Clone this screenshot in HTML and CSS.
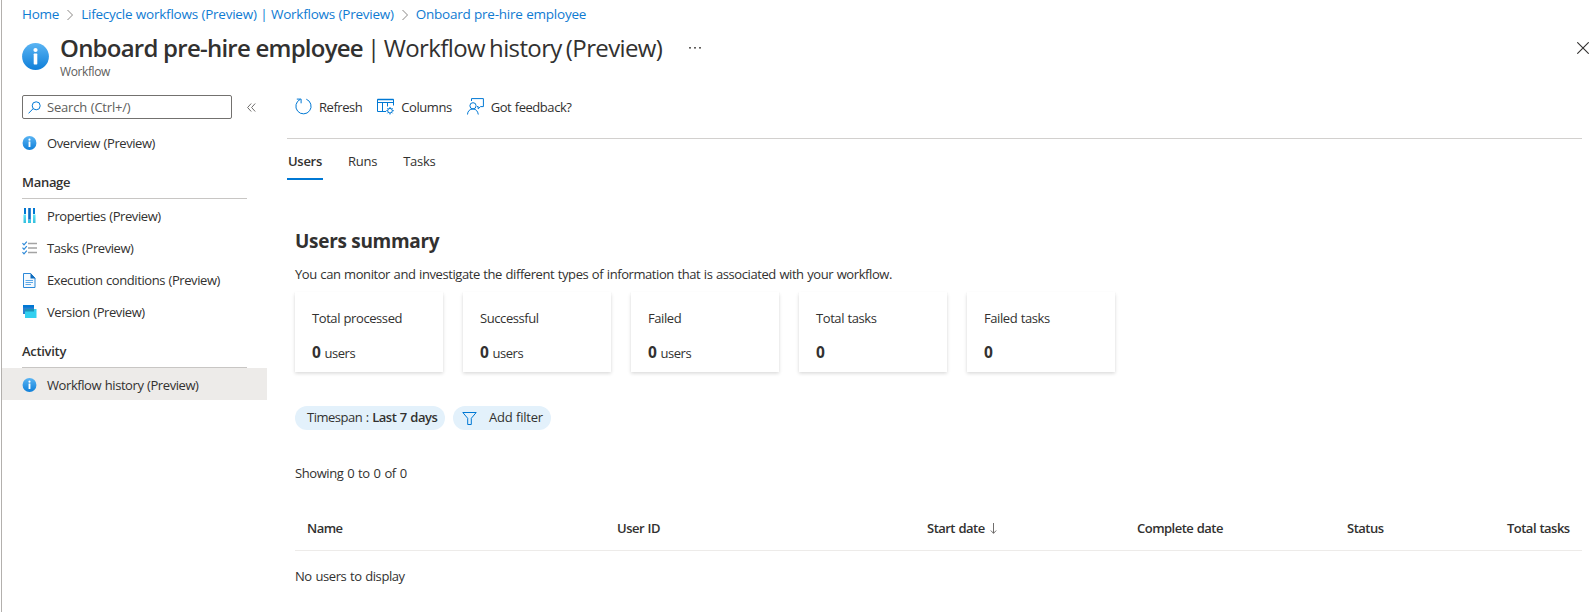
FILE: index.html
```html
<!DOCTYPE html>
<html lang="en">
<head>
<meta charset="utf-8">
<title>Onboard pre-hire employee | Workflow history (Preview)</title>
<link rel="stylesheet" href="styles.css">
</head>
<body>
<svg class="defs" width="0" height="0" aria-hidden="true">
  <defs>
    <linearGradient id="blue" x1="0" y1="0" x2="0" y2="1"><stop offset="0" stop-color="#5ab4f3"/><stop offset="1" stop-color="#0f7fd9"/></linearGradient>
    <linearGradient id="cyan" x1="0" y1="0" x2="0" y2="1"><stop offset="0" stop-color="#5ee3f8"/><stop offset="1" stop-color="#32bedd"/></linearGradient>
    <symbol id="info" viewBox="0 0 27 27"><circle cx="13.5" cy="13.5" r="13.4" fill="url(#blue)"/><circle cx="13.5" cy="7" r="2.1" fill="#fff"/><rect x="11.7" y="10.6" width="3.6" height="10.8" rx=".6" fill="#fff"/></symbol>
    <symbol id="chev" viewBox="0 0 8 12"><path d="M1.5 1l5 5-5 5" fill="none" stroke="#8a8886"/></symbol>
  </defs>
</svg>
<div class="page">
  <nav class="crumbs">
    <a>Home</a><svg class="sep" width="8" height="12"><use href="#chev"/></svg>
    <a>Lifecycle workflows (Preview) | Workflows (Preview)</a><svg class="sep" width="8" height="12"><use href="#chev"/></svg>
    <a>Onboard pre-hire employee</a>
  </nav>
  <header class="head">
    <svg class="head-icon" width="27" height="27"><use href="#info"/></svg>
    <div class="head-text">
      <h1><b>Onboard pre-hire employee</b><span class="light"> | Workflow history (Preview)</span></h1>
      <p class="sub">Workflow</p>
    </div>
    <svg class="more" width="12" height="3" fill="#605e5c"><rect x="0" y="1" width="2" height="1.6"/><rect x="5" y="1" width="2" height="1.6"/><rect x="10" y="1" width="2" height="1.6"/></svg>
    <svg class="close" width="12" height="12" viewBox="0 0 12 12"><path d="M.3.3l11.4 11.4M11.7.3L.3 11.7" stroke="#323130" stroke-width="1.1"/></svg>
  </header>
  <div class="body">
    <aside class="side">
      <div class="search-row">
        <div class="search"><svg width="13" height="13" viewBox="0 0 13 13" fill="none" stroke="#0078d4"><circle cx="8.2" cy="4.8" r="4"/><path d="M5.2 7.6L.5 12.4"/></svg><span>Search (Ctrl+/)</span></div>
        <svg class="collapse" width="9" height="9" viewBox="0 0 9 9" fill="none" stroke="#605e5c" stroke-width=".9"><path d="M4.2.5l-3.6 4 3.6 4M8.2.5l-3.6 4 3.6 4"/></svg>
      </div>
      <a class="item overview"><svg width="14" height="14"><use href="#info"/></svg>Overview (Preview)</a>
      <h2>Manage</h2>
      <a class="item"><svg class="i-props" width="15" height="16" viewBox="0 0 15 16"><path d="M2 0h2v6H2zM11 0h2v6h-2z" fill="#0078d4"/><path d="M6 0h3v12H6z" fill="#5ea8e6"/><path d="M6.500 0h2v11h-2z" fill="#0f6cbd"/><path d="M1.500 6.500H4V15H1.500zM11 6.500h2.500V15H11zM6 12h3v3H6z" fill="url(#cyan)"/></svg>Properties (Preview)</a>
      <a class="item"><svg width="15" height="14" viewBox="0 0 15 14" fill="none"><path d="M6 2.5h9M6 7h9M6 11.5h9" stroke="#a3a3a3" stroke-width="1.5"/><path d="M.5 2.2L2 3.8 4.8.7M.5 6.7L2 8.3l2.8-3.1M.5 11.2L2 12.8l2.8-3.1" stroke="#2b88d8" stroke-width="1.2"/></svg>Tasks (Preview)</a>
      <a class="item"><svg width="15" height="15" viewBox="0 0 15 15"><path d="M1.500.5h7L13 5v9.500H1.500z" fill="#f3f9fe" stroke="#2b88d8"/><path d="M8.500 0L13.500 5.500h-5z" fill="#0f6cbd"/><path d="M3.500 7.500H11M3.500 9.500H11M3.500 11.500H9" stroke="#5ea8e6"/></svg>Execution conditions (Preview)</a>
      <a class="item"><svg width="15" height="14" viewBox="0 0 15 14"><path d="M1 0h11v9H1z" fill="#2b7fd0"/><path d="M1 0h11v2.500H1z" fill="#0078d4"/><path d="M3 4h11.500v9H3z" fill="#32d0f0"/><path d="M3 4h9v2.500H3z" fill="#1b93b8"/></svg>Version (Preview)</a>
      <h2 class="act">Activity</h2>
      <a class="item on"><svg width="14" height="14"><use href="#info"/></svg>Workflow history (Preview)</a>
    </aside>
    <main class="main">
      <div class="cmds">
        <span class="cmd refresh"><svg width="17" height="17" viewBox="0 0 17 17" fill="none" stroke="#0078d4"><path d="M11.300 1.200A7.600 7.600 0 1 1 5.200 1.400"/><path d="M1.800 1.100h4.300v4.200"/></svg>Refresh</span>
        <span class="cmd"><svg width="17" height="17" viewBox="0 0 17 17" fill="none" stroke="#0078d4"><path d="M9 13.500H.5V1.500h16v6M.5 4.500h16M5.500 4.500v9M10.500 4.500v4"/><path d="M.5 1.500h16" stroke-width="1.500"/><circle cx="13" cy="12.700" r="2.300"/><path d="M13 9v1.400M13 15v1.500M9.300 12.700h1.400M15.300 12.700h1.500M10.400 10.100l1 1M15.600 10.100l-1 1M10.400 15.300l1-1M15.600 15.300l-1-1"/></svg>Columns</span>
        <span class="cmd"><svg width="17" height="17" viewBox="0 0 17 17" fill="none" stroke="#0078d4"><circle cx="6" cy="7.800" r="3.100"/><path d="M.5 16.500c0-3.400 2.400-5.500 5.500-5.500s4.700 2.100 5.300 5.500"/><path d="M4.500 3V.6h11.900v8h-2.900l-2.300 2.300V8.600H10"/></svg>Got feedback?</span>
      </div>
      <div class="tabs"><span class="tab cur">Users</span><span class="tab">Runs</span><span class="tab">Tasks</span></div>
      <section class="content">
        <h3>Users summary</h3>
        <p class="desc">You can monitor and investigate the different types of information that is associated with your workflow.</p>
        <div class="cards">
          <div class="card"><span>Total processed</span><div><b>0</b> users</div></div>
          <div class="card"><span>Successful</span><div><b>0</b> users</div></div>
          <div class="card"><span>Failed</span><div><b>0</b> users</div></div>
          <div class="card"><span>Total tasks</span><div><b>0</b></div></div>
          <div class="card"><span>Failed tasks</span><div><b>0</b></div></div>
        </div>
        <div class="pills">
          <span class="pill time">Timespan :&nbsp;<b>Last 7 days</b></span>
          <span class="pill add"><svg width="15" height="13" viewBox="0 0 15 13" fill="none" stroke="#0078d4"><path d="M.8.500h13.400L9.300 6.300v6.200H5.700V6.300z"/></svg>Add filter</span>
        </div>
        <p class="count">Showing 0 to 0 of 0</p>
        <div class="thead"><span>Name</span><span>User ID</span><span>Start date<svg width="7" height="11" viewBox="0 0 7 11" fill="none" stroke="#605e5c" stroke-width=".9"><path d="M3.500 0v10.300M.8 7.500l2.700 2.800 2.700-2.800"/></svg></span><span>Complete date</span><span>Status</span><span>Total tasks</span></div>
        <p class="empty">No users to display</p>
      </section>
    </main>
  </div>
</div>
</body>
</html>
```
FILE: styles.css
```css
* { box-sizing: border-box; }
body { margin: 0; background: #fff; color: #323130; font: 13px/20px "Open Sans", "Noto Sans", sans-serif; letter-spacing: -0.42px; word-spacing: 0.6px; overflow: hidden; }
h1, h2, h3, p { margin: 0; font-weight: 400; }
b { font-weight: 600; }
svg { flex: none; display: block; }
.defs { position: absolute; }
.page { margin-left: 1px; height: 612px; border-left: 1px solid #b3b0ad; }
.crumbs { display: flex; align-items: center; height: 28px; padding-left: 20px; color: #0f7bd2; white-space: nowrap; font-size: 13.5px; letter-spacing: -0.24px; word-spacing: 0.3px; }
.sep { margin: 2px 7px 0 7px; }
.head { display: flex; height: 59px; padding-left: 20px; }
.head-icon { margin-top: 15px; }
.head-text { margin: 4px 0 0 11px; white-space: nowrap; }
.head h1 { font-size: 24px; line-height: 32px; letter-spacing: -0.76px; word-spacing: 0; }
.light { letter-spacing: -0.62px; word-spacing: -1.5px; }
.sub { font-size: 12px; line-height: 16px; letter-spacing: -0.4px; color: #605e5c; }
.more { margin: 18px 0 0 27px; }
.close { margin: 14px 3px 0 auto; }
.body { display: flex; }
.side { width: 265px; padding-top: 8px; }
.search-row { display: flex; align-items: center; padding-left: 20px; }
.search { display: flex; align-items: center; gap: 6px; width: 210px; height: 24px; border: 1px solid #73716f; border-radius: 2px; padding-left: 5px; color: #605e5c; letter-spacing: -0.2px; }
.collapse { margin-left: 15px; }
.item { display: flex; align-items: center; height: 32px; padding-left: 45px; white-space: nowrap; }
.item svg { margin: 0 10px 0 -25px; width: 15px; }
.overview { margin-top: 8px; }
.side h2 { margin: 12px 20px 1px; height: 28px; padding-top: 1px; border-bottom: 1px solid #c8c6c4; font-size: 13px; line-height: 20px; font-weight: 600; letter-spacing: -0.3px; }
.side .act { margin-bottom: 0; }
.on { background: #edebe9; padding-top: 1px; }
.main { flex: 1; padding: 0 10px 0 20px; }
.cmds { display: flex; gap: 15px; height: 52px; padding: 9px 0 0 7px; border-bottom: 1px solid #d2d0ce; }
.cmd { display: flex; height: 22px; align-items: center; gap: 7px; letter-spacing: -0.45px; }
.cmd svg { margin-top: -2px; }
.refresh { padding-left: 1px; }
.tabs { display: flex; gap: 24px; height: 41px; padding-top: 11px; letter-spacing: -0.25px; }
.tab { height: 30px; padding: 1px 0 0 1px; }
.tab:last-child { margin-left: 1px; }
.cur { width: 36px; font-weight: 600; letter-spacing: -0.3px; border-bottom: 2px solid #0078d4; }
.content { padding-left: 8px; }
.content h3 { margin-top: 47px; font-size: 19px; line-height: 28px; font-weight: 700; letter-spacing: -0.3px; word-spacing: 0; }
.desc { margin-top: 9px; line-height: 20px; }
.cards { display: flex; gap: 20px; margin-top: 8px; }
.card { width: 148px; height: 80px; padding: 16px 17px; box-shadow: 0 1.600px 3.600px rgba(0,0,0,.16), 0 .3px .9px rgba(0,0,0,.12); display: flex; flex-direction: column; gap: 14px; }
.card div { word-spacing: 1px; }
.card b { font-size: 15.5px; font-weight: 700; }
.pills { display: flex; gap: 8px; margin-top: 34px; }
.pill { display: flex; align-items: center; height: 24px; border-radius: 12px; background: #e3f1fb; white-space: nowrap; padding: 0 0 2px 12px; }
.time { width: 150px; letter-spacing: -0.48px; }
.add { width: 98px; padding-left: 9px; gap: 12px; letter-spacing: -0.25px; }
.add svg { margin-top: 2px; }
.count { margin-top: 33px; word-spacing: 0.9px; }
.thead { display: grid; grid-template-columns: 310px 310px 210px 210px 160px 1fr; height: 52px; margin-top: 16px; padding: 19px 0 0 12px; border-bottom: 1px solid #edebe9; font-weight: 600; white-space: nowrap; letter-spacing: -0.52px; }
.thead span { display: flex; align-items: center; height: 20px; gap: 5px; }
.empty { margin-top: 15px; word-spacing: 0.7px; }
```
